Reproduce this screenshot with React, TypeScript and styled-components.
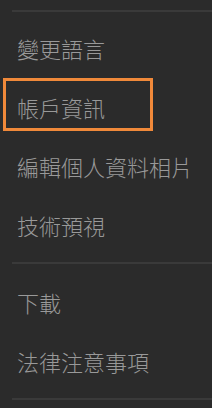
import React from 'react'
import styled, { createGlobalStyle } from 'styled-components'

const GlobalStyle = createGlobalStyle`
  html, body {
    margin: 0;
    padding: 0;
    background: #2b2b2b;
  }
  body {
    font-family: "Noto Sans CJK TC", "Noto Sans", sans-serif;
  }
`

const sections: { label: string; focused?: boolean }[][] = [
  [
    { label: '變更語言' },
    { label: '帳戶資訊', focused: true },
    { label: '編輯個人資料相片' },
    { label: '技術預視' },
  ],
  [{ label: '下載' }, { label: '法律注意事項' }],
]

export default function App() {
  return (
    <>
      <GlobalStyle />
      <Menu>
        {sections.map((items, i) => (
          <Section key={i}>
            {items.map((item) => (
              <Item key={item.label} $focused={item.focused}>
                {item.label}
              </Item>
            ))}
          </Section>
        ))}
        <Divider />
      </Menu>
    </>
  )
}

const Menu = styled.div`
  width: 212px;
  height: 408px;
  overflow: hidden;
  padding-top: 10px;
  box-sizing: border-box;
`

const Section = styled.div`
  border-top: 2px solid #3a3a3a;
  margin-left: 12px;
  padding: 6px 0 8px;
  & + & {
    padding-top: 8px;
  }
`

const Divider = styled.div`
  height: 2px;
  margin-left: 12px;
  background: #3a3a3a;
`

const Item = styled.div<{ $focused?: boolean }>`
  position: relative;
  height: 59px;
  display: flex;
  align-items: center;
  margin-left: -12px;
  padding-left: 17px;
  font-size: 22px;
  font-weight: 300;
  color: #999999;
  white-space: nowrap;
  ${({ $focused }) =>
    $focused &&
    `
    &::after {
      content: '';
      position: absolute;
      left: 3px;
      top: 1px;
      width: 150px;
      height: 53px;
      box-sizing: border-box;
      border: 3px solid #f0893a;
    }
  `}
`
